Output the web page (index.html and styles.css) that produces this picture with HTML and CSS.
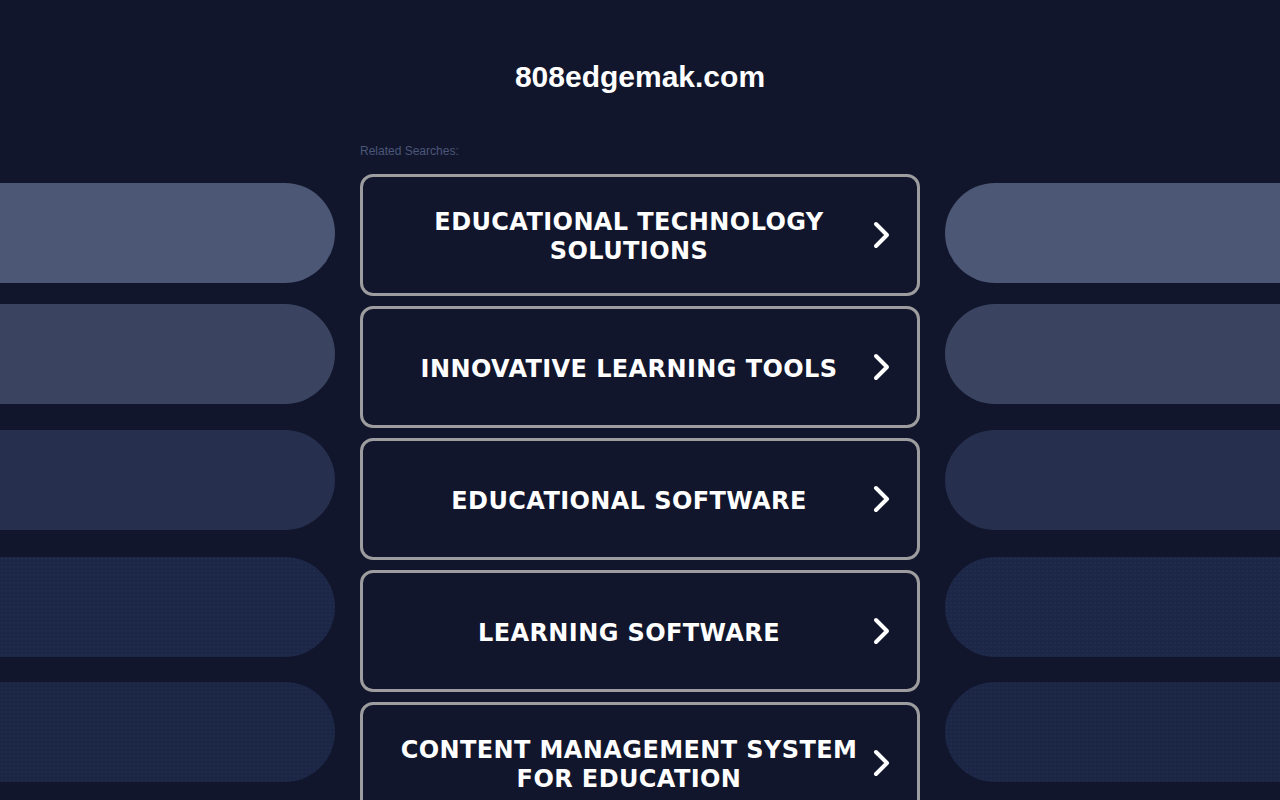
FILE: index.html
```html
<!DOCTYPE html>
<html lang="en">
<head>
<meta charset="utf-8">
<title>808edgemak.com</title>
<link rel="stylesheet" href="styles.css">
</head>
<body>
<header class="header">
  <h1 class="title">808edgemak.com</h1>
</header>
<main class="layout">
  <div class="side side-left">
    <div class="pill pill-1"></div>
    <div class="pill pill-2"></div>
    <div class="pill pill-3"></div>
    <div class="pill pill-4 dotted"></div>
    <div class="pill pill-5 dotted"></div>
  </div>
  <div class="center">
    <p class="label">Related Searches:</p>
    <a class="search" href="#">
      <span class="search-text">EDUCATIONAL TECHNOLOGY SOLUTIONS</span>
      <svg class="chev" viewBox="0 0 22 28" width="22" height="28"><polyline points="5,3 16,14 5,25" /></svg>
    </a>
    <a class="search" href="#">
      <span class="search-text">INNOVATIVE LEARNING TOOLS</span>
      <svg class="chev" viewBox="0 0 22 28" width="22" height="28"><polyline points="5,3 16,14 5,25" /></svg>
    </a>
    <a class="search" href="#">
      <span class="search-text">EDUCATIONAL SOFTWARE</span>
      <svg class="chev" viewBox="0 0 22 28" width="22" height="28"><polyline points="5,3 16,14 5,25" /></svg>
    </a>
    <a class="search" href="#">
      <span class="search-text">LEARNING SOFTWARE</span>
      <svg class="chev" viewBox="0 0 22 28" width="22" height="28"><polyline points="5,3 16,14 5,25" /></svg>
    </a>
    <a class="search" href="#">
      <span class="search-text">CONTENT MANAGEMENT SYSTEM FOR EDUCATION</span>
      <svg class="chev" viewBox="0 0 22 28" width="22" height="28"><polyline points="5,3 16,14 5,25" /></svg>
    </a>
  </div>
  <div class="side side-right">
    <div class="pill pill-1"></div>
    <div class="pill pill-2"></div>
    <div class="pill pill-3"></div>
    <div class="pill pill-4 dotted"></div>
    <div class="pill pill-5 dotted"></div>
  </div>
</main>
</body>
</html>
```

FILE: styles.css
```css
html, body {
  margin: 0;
  padding: 0;
}
body {
  background: #11162c;
  width: 1280px;
  height: 800px;
  overflow: hidden;
  font-family: "Liberation Sans", Arial, sans-serif;
}
.header {
  height: 140px;
  box-sizing: border-box;
  padding-top: 59px;
  text-align: center;
}
.title {
  margin: 0;
  font-family: "Liberation Sans", Arial, sans-serif;
  font-weight: 700;
  font-size: 30px;
  line-height: 36px;
  color: #ffffff;
}
.layout {
  display: grid;
  grid-template-columns: 1fr 560px 1fr;
  column-gap: 25px;
}
.side {
  display: flex;
  flex-direction: column;
  padding-top: 43px;
}
.pill {
  height: 100px;
  flex: none;
}
.side-left .pill { border-radius: 0 50px 50px 0; }
.side-right .pill { border-radius: 50px 0 0 50px; }
.pill-1 { background: #4c5775; }
.pill-2 { background: #3a4461; margin-top: 21px; }
.pill-3 { background: #262f4d; margin-top: 26px; }
.pill-4 { background-color: #1c2646; margin-top: 27px; }
.pill-5 { background-color: #1b2544; margin-top: 25px; }
.dotted {
  background-image: radial-gradient(rgba(60, 75, 115, 0.22) 0.6px, transparent 0.9px);
  background-size: 4px 4px;
}
.center {
  display: flex;
  flex-direction: column;
}
.label {
  margin: 4px 0 15px;
  font-size: 12px;
  line-height: 15px;
  color: #4b5679;
}
.search {
  display: flex;
  align-items: center;
  box-sizing: border-box;
  height: 122px;
  margin-bottom: 10px;
  padding: 0 24px;
  border: 3px solid #9d9d9f;
  border-radius: 13px;
  text-decoration: none;
  flex: none;
}
.search-text {
  flex: 1;
  padding-top: 4px;
  text-align: center;
  font-family: "DejaVu Sans", Verdana, sans-serif;
  font-weight: 700;
  font-size: 24px;
  line-height: 29px;
  letter-spacing: 0.4px;
  color: #ffffff;
}
.chev {
  flex: none;
  fill: none;
  stroke: #ffffff;
  stroke-width: 4;
  stroke-linecap: round;
  stroke-linejoin: round;
}
```
